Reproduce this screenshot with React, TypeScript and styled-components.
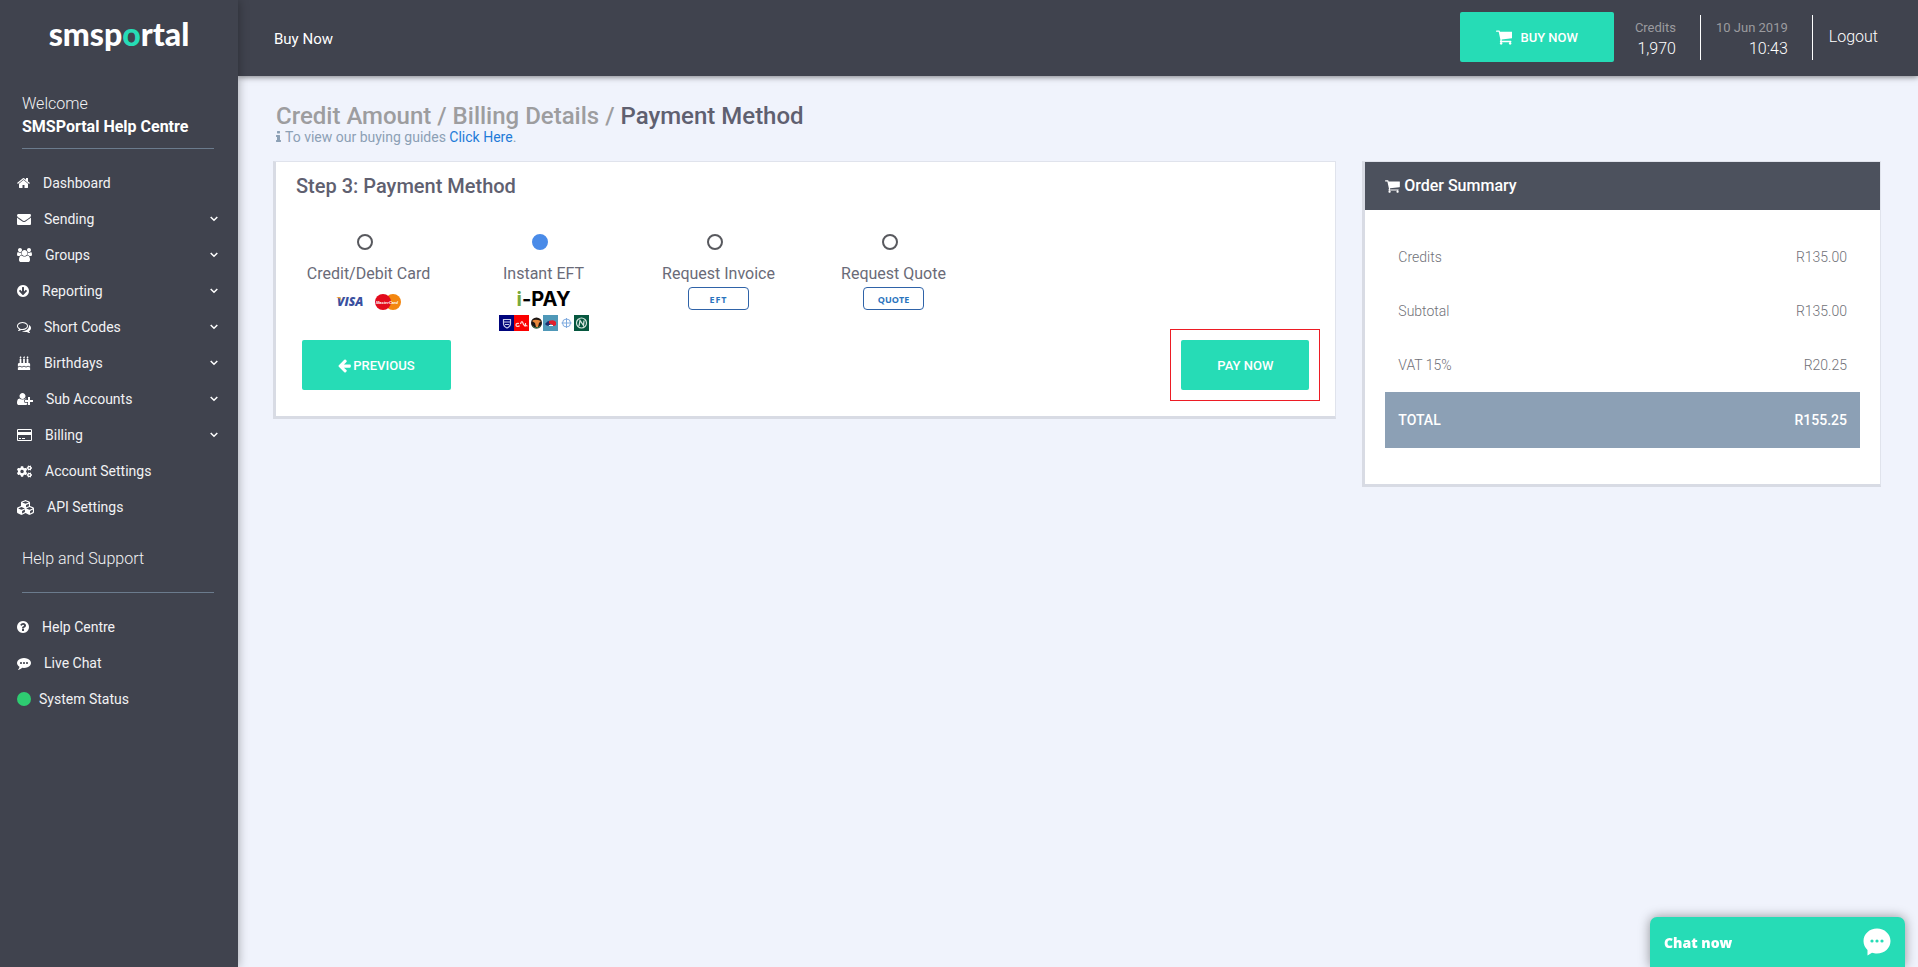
import React, { useState } from "react";
import styled, { createGlobalStyle } from "styled-components";
import { FaBirthdayCake, FaCogs, FaCubes } from "react-icons/fa";

const GlobalStyle = createGlobalStyle`
  *, *::before, *::after { box-sizing: border-box; }
  body {
    margin: 0;
    background: #f0f3fc;
    color: #5f6070;
    font-family: Roboto, "Liberation Sans", sans-serif;
    font-size: 14px;
    line-height: 20px;
  }
  h1, h2, p, ul { margin: 0; padding: 0; }
  ul { list-style: none; }
  a { text-decoration: none; color: inherit; }
  button { font-family: inherit; cursor: pointer; }
`;

const glyphs = {
  home: {
    box: "64 0 1664 1792",
    d: "M1472 992v480q0 26-19 45t-45 19h-384v-384h-256v384h-384q-26 0-45-19t-19-45v-480q0-1 .5-3t.5-3l575-474 575 474q1 2 1 6zm223-69l-62 74q-8 9-21 11h-3q-13 0-21-7l-692-577-692 577q-12 8-24 7-13-2-21-11l-62-74q-8-10-7-23.5t11-21.5l719-599q32-26 76-26t76 26l244 204v-195q0-14 9-23t23-9h192q14 0 23 9t9 23v408l219 182q10 8 11 21.5t-7 23.5z",
  },
  envelope: {
    box: "0 0 1792 1792",
    d: "M1792 710v794q0 66-47 113t-113 47h-1472q-66 0-113-47t-47-113v-794q44 49 101 87 362 246 497 345 57 42 92.5 65.5t94.5 48 110 24.5h2q51 0 110-24.5t94.5-48 92.5-65.5q170-123 498-345 57-39 100-87zm0-294q0 79-49 151t-122 123q-376 261-468 325-10 7-42.5 31t-54 38.5-52 32.5-57.5 27-50 9h-2q-23 0-50-9t-57.5-27-52-32.5-54-38.5-42.5-31q-91-64-262-182.5t-205-142.5q-62-42-117-115.5t-55-136.5q0-78 41.5-130t118.5-52h1472q65 0 112.5 47t47.5 113z",
  },
  users: {
    box: "0 0 1920 1792",
    d: "M593 896q-162 5-265 128h-134q-82 0-138-40.5t-56-118.5q0-353 124-353 6 0 43.5 21t97.5 42.5 119 21.5q67 0 133-23-5 37-5 66 0 139 81 256zm1071 637q0 120-73 189.5t-194 69.5h-874q-121 0-194-69.5t-73-189.5q0-53 3.5-103.5t14-109 26.5-108.5 43-97.5 62-81 85.5-53.5 111.5-20q10 0 43 21.5t73 48 107 48 135 21.5 135-21.5 107-48 73-48 43-21.5q61 0 111.5 20t85.5 53.5 62 81 43 97.5 26.5 108.5 14 109 3.5 103.5zm-1024-1277q0 106-75 181t-181 75-181-75-75-181 75-181 181-75 181 75 75 181zm704 384q0 159-112.5 271.5t-271.5 112.5-271.5-112.5-112.5-271.5 112.5-271.5 271.5-112.5 271.5 112.5 112.5 271.5zm576 225q0 78-56 118.5t-138 40.5h-134q-103-123-265-128 81-117 81-256 0-29-5-66 66 23 133 23 59 0 119-21.5t97.5-42.5 43.5-21q124 0 124 353zm-128-609q0 106-75 181t-181 75-181-75-75-181 75-181 181-75 181 75 75 181z",
  },
  arrowCircleDown: {
    box: "128 0 1536 1792",
    d: "M1412 897q0-27-18-45l-91-91q-18-18-45-18t-45 18l-189 189v-502q0-26-19-45t-45-19h-128q-26 0-45 19t-19 45v502l-189-189q-19-19-45-19t-45 19l-91 91q-18 18-18 45t18 45l362 362 91 91q18 18 45 18t45-18l91-91 362-362q18-18 18-45zm252-1q0 209-103 385.5t-279.5 279.5-385.5 103-385.5-103-279.5-279.5-103-385.5 103-385.5 279.5-279.5 385.5-103 385.5 103 279.5 279.5 103 385.5z",
  },
  comments: {
    box: "0 0 1792 1792",
    d: "M704 384q-153 0-286 52t-211.5 141-78.5 191q0 82 53 158t149 132l97 56-35 84q34-20 62-39l44-31 53 10q78 14 153 14 153 0 286-52t211.5-141 78.5-191-78.5-191-211.5-141-286-52zm0-128q191 0 353.5 68.5t256.5 186.5 94 257-94 257-256.5 186.5-353.5 68.5q-86 0-176-16-124 88-278 128-36 9-86 16h-3q-11 0-20.5-8t-11.5-21q-1-3-1-6.5t.5-6.5 2-6l2.5-5 3.5-5.5 4-5 4.5-5 4-4.5q5-6 23-25t26-29.5 22.5-29 25-38.5 20.5-44q-124-72-195-177t-71-224q0-139 94-257t256.5-186.5 353.5-68.5zm822 1169q10 24 20.5 44t25 38.5 22.5 29 26 29.5 23 25q1 1 4 4.5t4.5 5 4 5 3.5 5.5l2.5 5 2 6 .5 6.5-1 6.5q-3 14-13 22t-22 7q-50-7-86-16-154-40-278-128-90 16-176 16-271 0-472-132 58 4 88 4 161 0 309-45t264-129q125-92 192-212t67-254q0-77-23-152 129 71 204 178t75 230q0 120-71 224.5t-195 176.5z",
  },
  userPlus: {
    box: "0 0 2048 1792",
    d: "M704 896q-159 0-271.5-112.5t-112.5-271.5 112.5-271.5 271.5-112.5 271.5 112.5 112.5 271.5-112.5 271.5-271.5 112.5zm960 128h352q13 0 22.5 9.5t9.5 22.5v192q0 13-9.5 22.5t-22.5 9.5h-352v352q0 13-9.5 22.5t-22.5 9.5h-192q-13 0-22.5-9.5t-9.5-22.5v-352h-352q-13 0-22.5-9.5t-9.5-22.5v-192q0-13 9.5-22.5t22.5-9.5h352v-352q0-13 9.5-22.5t22.5-9.5h192q13 0 22.5 9.5t9.5 22.5v352zm-736 224q0 52 38 90t90 38h256v238q-68 50-171 50h-874q-121 0-194-69t-73-190q0-53 3.5-103.5t14-109 26.5-108.5 43-97.5 62-81 85.5-53.5 111.5-20q19 0 39 17 79 61 154.5 91.5t164.5 30.5 164.5-30.5 154.5-91.5q20-17 39-17 132 0 217 96h-223q-52 0-90 38t-38 90v192z",
  },
  creditCard: {
    box: "0 0 1920 1792",
    d: "M1760 128q66 0 113 47t47 113v1216q0 66-47 113t-113 47h-1600q-66 0-113-47t-47-113v-1216q0-66 47-113t113-47h1600zm-1600 128q-13 0-22.5 9.5t-9.5 22.5v224h1664v-224q0-13-9.5-22.5t-22.5-9.5h-1600zm1600 1280q13 0 22.5-9.5t9.5-22.5v-608h-1664v608q0 13 9.5 22.5t22.5 9.5h1600zm-1504-128v-128h256v128h-256zm384 0v-128h384v128h-384z",
  },
  question: {
    box: "128 0 1536 1792",
    d: "M1024 1376v-192q0-14-9-23t-23-9h-192q-14 0-23 9t-9 23v192q0 14 9 23t23 9h192q14 0 23-9t9-23zm256-672q0-88-55.5-163t-138.5-116-170-41q-243 0-371 213-15 24 8 42l132 100q7 6 19 6 16 0 25-12 53-68 86-92 34-24 86-24 48 0 85.5 26t37.5 59q0 38-20 61t-68 45q-63 28-115.5 86.5t-52.5 125.5v36q0 14 9 23t23 9h192q14 0 23-9t9-23q0-19 21.5-49.5t54.5-49.5q32-18 49-28.5t46-35 44.5-48 28-60.5 12.5-81zm384 192q0 209-103 385.5t-279.5 279.5-385.5 103-385.5-103-279.5-279.5-103-385.5 103-385.5 279.5-279.5 385.5-103 385.5 103 279.5 279.5 103 385.5z",
  },
  commenting: {
    box: "0 0 1792 1792",
    d: "M640 896q0-53-37.5-90.5t-90.5-37.5-90.5 37.5-37.5 90.5 37.5 90.5 90.5 37.5 90.5-37.5 37.5-90.5zm384 0q0-53-37.5-90.5t-90.5-37.5-90.5 37.5-37.5 90.5 37.5 90.5 90.5 37.5 90.5-37.5 37.5-90.5zm384 0q0-53-37.5-90.5t-90.5-37.5-90.5 37.5-37.5 90.5 37.5 90.5 90.5 37.5 90.5-37.5 37.5-90.5zm384 0q0 174-120 321.5t-326 233-450 85.5q-110 0-211-18-173 173-435 229-52 10-86 13-12 1-22-6t-13-18q-4-15 20-37 5-5 23.5-21.5t25.5-23.5 23.5-25.5 24-31.5 20.5-37 20-48 14.5-57.5 12.5-72.5q-146-90-229.5-216.5t-83.5-269.5q0-174 120-321.5t326-233 450-85.5 450 85.5 326 233 120 321.5z",
  },
  cart: {
    box: "64 0 1664 1792",
    d: "M704 1536q0 52-38 90t-90 38-90-38-38-90 38-90 90-38 90 38 38 90zm896 0q0 52-38 90t-90 38-90-38-38-90 38-90 90-38 90 38 38 90zm128-1088v512q0 24-16.5 42.5t-40.5 21.5l-1044 122q13 60 13 70 0 16-24 64h920q26 0 45 19t19 45-19 45-45 19h-1024q-26 0-45-19t-19-45q0-11 8-31.5t16-36 21.5-40 15.5-29.5l-177-823h-204q-26 0-45-19t-19-45 19-45 45-19h256q16 0 28.5 6.5t19.5 15.5 13 24.5 8 26 5.5 29.5 4.5 26h1201q26 0 45 19t19 45z",
  },
  arrowLeft: {
    box: "128 0 1536 1792",
    d: "M1664 896v128q0 53-32.5 90.5t-84.5 37.5h-704l293 294q38 36 38 90t-38 90l-75 76q-37 37-90 37-52 0-91-37l-651-652q-37-37-37-90 0-52 37-91l651-650q38-38 91-38 52 0 90 38l75 74q38 38 38 91t-38 91l-293 293h704q52 0 84.5 37.5t32.5 90.5z",
  },
  info: {
    box: "576 0 640 1792",
    d: "M1216 1344v128q0 26-19 45t-45 19h-512q-26 0-45-19t-19-45v-128q0-26 19-45t45-19h64v-384h-64q-26 0-45-19t-19-45v-128q0-26 19-45t45-19h384q26 0 45 19t19 45v576h64q26 0 45 19t19 45zm-128-1152v192q0 26-19 45t-45 19h-256q-26 0-45-19t-19-45v-192q0-26 19-45t45-19h256q26 0 45 19t19 45z",
  },
};

type GlyphName = keyof typeof glyphs;

const GlyphSvg = styled.svg<{ $size: number }>`
  height: ${(p) => p.$size}px;
  width: auto;
  flex: none;
  fill: currentColor;
`;

const Glyph = ({ name, size = 14 }: { name: GlyphName; size?: number }) => (
  <GlyphSvg $size={size} viewBox={glyphs[name].box} aria-hidden="true">
    <path d={glyphs[name].d} />
  </GlyphSvg>
);

/* ---------- frame ---------- */

const Page = styled.div`
  display: grid;
  grid-template-columns: 238px 1fr;
  min-height: 100vh;
`;

const Sidebar = styled.aside`
  background: #40434e;
  color: #f2f2f4;
  box-shadow: 0 0 10px rgba(0, 0, 0, 0.35);
  z-index: 2;
`;

const Logo = styled.a`
  display: flex;
  justify-content: center;
  padding: 16px 0 0 0;
  height: 92px;
  color: #fff;
  font-family: Lato, sans-serif;
  font-weight: 900;
  font-size: 32px;
  line-height: 36px;

  em {
    font-style: normal;
    color: #26dcb6;
  }
`;

const SideHeading = styled.div<{ $gap: number }>`
  margin: 0 24px 0 22px;
  padding-bottom: ${(p) => p.$gap}px;
  border-bottom: 1px solid #6b7b8d;
  font-size: 16px;
  font-weight: 300;
  line-height: 23px;

  strong {
    display: block;
    color: #fff;
    font-weight: 700;
  }
`;

const Menu = styled.ul<{ $bottom?: number }>`
  padding: 16px 20px ${(p) => p.$bottom ?? 0}px 17px;
`;

const MenuLink = styled.a<{ $gap?: number }>`
  display: flex;
  align-items: center;
  gap: ${(p) => p.$gap ?? 13}px;
  height: 36px;
  font-size: 14px;

  svg { color: #fff; }
`;

const ChevronSvg = styled.svg`
  width: 8px;
  height: 6px;
  margin-left: auto;
  fill: none;
  stroke: currentColor;
  stroke-width: 1.5;
`;

const StatusDot = styled.span`
  width: 14px;
  height: 14px;
  border-radius: 50%;
  background: #2ecc71;
`;

const Column = styled.div`
  min-width: 0;
`;

const TopBar = styled.header`
  display: flex;
  align-items: center;
  height: 76px;
  padding: 0 40px 2px 36px;
  background: #40434e;
  color: #fff;
  font-size: 16px;
  box-shadow: 0 1px 6px rgba(0, 0, 0, 0.5);
`;

const BarTitle = styled.div`
  flex: 1;
  padding-top: 4px;
  font-size: 15px;
`;

const Button = styled.button<{ $width: number }>`
  display: flex;
  align-items: center;
  justify-content: center;
  gap: 2px;
  width: ${(p) => p.$width}px;
  height: 50px;
  padding: 0;
  border: 0;
  border-radius: 2px;
  background: #26dcb6;
  color: #fff;
  font-size: 13px;
  font-weight: 500;
`;

const BuyButton = styled(Button)`
  gap: 8px;
  margin-right: 6px;
`;

const BarStat = styled.div`
  padding: 3px 24px 0 15px;
  border-right: 1px solid #fff;
  text-align: right;
  font-weight: 300;
  line-height: 22px;

  small {
    display: block;
    color: #9b9b9f;
    font-size: 13px;
    font-weight: 400;
    line-height: 20px;
  }
`;

const Logout = styled.a`
  padding-left: 16px;
  font-weight: 300;
`;

/* ---------- content ---------- */

const Main = styled.main`
  padding: 26px 24px 24px 22px;
`;

const PageHead = styled.div`
  padding: 0 13px 0 16px;
  margin-bottom: 17px;
`;

const Crumbs = styled.h1`
  color: #9d9d9f;
  font-size: 24px;
  line-height: 28px;
  font-weight: 500;

  span { color: #5f6070; }
`;

const Hint = styled.p`
  display: flex;
  align-items: center;
  gap: 4px;
  color: #8ca0b5;
  line-height: 12px;

  a { color: #1f7bd8; }
`;

const Cards = styled.div`
  display: grid;
  grid-template-columns: 2fr 1fr;
  align-items: start;
`;

const Card = styled.section`
  margin: 0 13px;
  border: 1px solid #e0e3ec;
  border-left: 3px solid #d8dbe4;
  border-bottom: 3px solid #d8dbe4;
  background: #fff;
`;

const StepTitle = styled.h2`
  padding: 12px 20px;
  font-size: 20px;
  line-height: 24px;
  font-weight: 500;
`;

const Options = styled.div`
  display: flex;
  padding: 22px 0 0 5px;
`;

const Option = styled.label`
  display: flex;
  flex-direction: column;
  align-items: center;
  width: 175px;
  height: 97px;
  font-size: 16px;
  color: #6a6b78;
  cursor: pointer;
`;

const Radio = styled.input`
  appearance: none;
  flex: none;
  width: 16px;
  height: 16px;
  margin: 2px 7px 14px 0;
  border: 2px solid #58595e;
  border-radius: 50%;
  background: #fff;

  &:checked {
    border-color: #4a8be8;
    background: #4a8be8;
  }
`;

const CardLogos = styled.span`
  display: flex;
  align-items: center;
  gap: 8px;
  padding-top: 10px;

  svg { overflow: visible; }
`;

const Badge = styled.span`
  width: 61px;
  height: 23px;
  margin-top: 3px;
  border: 1px solid #2f63a8;
  border-radius: 4px;
  color: #2a74bd;
  font-family: "Open Sans", sans-serif;
  font-size: 9px;
  font-weight: 700;
  line-height: 23px;
  letter-spacing: 1px;
  text-align: center;
`;

const QuoteBadge = styled(Badge)`
  letter-spacing: normal;
`;

const IPay = styled.span`
  color: #000;
  font-family: Inter, "Liberation Sans", sans-serif;
  font-size: 20px;
  line-height: 30px;
  font-weight: 700;

  i { font-style: normal; color: #77a93c; }
`;

const Banks = styled.svg`
  flex: none;
  width: 90px;
  height: 16px;
  margin-top: 1px;
`;

const Actions = styled.div`
  display: flex;
  align-items: center;
  justify-content: space-between;
  padding: 0 15px 15px 26px;
`;

const Highlight = styled.div`
  padding: 10px;
  border: 1px solid #ed1c24;
`;

const OrderCard = styled(Card)`
  padding-bottom: 36px;
`;

const OrderTitle = styled.h2`
  display: flex;
  align-items: center;
  gap: 4px;
  height: 48px;
  padding: 0 20px;
  background: #4c515d;
  color: #fff;
  font-size: 16px;
  font-weight: 500;
`;

const OrderBody = styled.div`
  padding: 20px 20px 0;
`;

const OrderTable = styled.table`
  width: 100%;
  border-collapse: collapse;
  color: #707178;

  th, td {
    height: 54px;
    padding: 0 13px;
    font-weight: 300;
    text-align: left;
  }
  td { text-align: right; }
`;

const TotalRow = styled.tr`
  background: #8ca0b5;
  color: #fff;

  && th, && td {
    height: 56px;
    font-weight: 500;
  }
`;

const ChatButton = styled.button`
  position: fixed;
  right: 13px;
  bottom: 0;
  z-index: 5;
  display: flex;
  align-items: center;
  justify-content: space-between;
  width: 255px;
  height: 50px;
  padding: 0 14px;
  border: 0;
  border-radius: 7px 7px 0 0;
  background: #26dcb6;
  color: #fff;
  font-size: 14px;
  font-weight: 800;
  box-shadow: 0 0 12px rgba(0, 0, 0, 0.4);

  && { font-family: "Open Sans", sans-serif; }
`;

const Chevron = () => (
  <ChevronSvg viewBox="0 0 8 6" aria-hidden="true">
    <path d="M0.7 1l3.3 3.3L7.3 1" />
  </ChevronSvg>
);

const accountMenu: { label: string; icon: React.ReactNode; open?: boolean }[] = [
  { label: "Dashboard", icon: <Glyph name="home" /> },
  { label: "Sending", icon: <Glyph name="envelope" />, open: true },
  { label: "Groups", icon: <Glyph name="users" />, open: true },
  { label: "Reporting", icon: <Glyph name="arrowCircleDown" />, open: true },
  { label: "Short Codes", icon: <Glyph name="comments" />, open: true },
  { label: "Birthdays", icon: <FaBirthdayCake size={14} />, open: true },
  { label: "Sub Accounts", icon: <Glyph name="userPlus" />, open: true },
  { label: "Billing", icon: <Glyph name="creditCard" />, open: true },
  { label: "Account Settings", icon: <FaCogs size={15} /> },
  { label: "API Settings", icon: <FaCubes size={17} /> },
];

const VisaMaster = () => (
  <CardLogos>
    <svg width="30" height="12" viewBox="0 0 30 12" role="img" aria-label="Visa">
      <text x="0" y="10" fontFamily="Open Sans, sans-serif" fontSize="12" fontWeight="800" fontStyle="italic" fill="#3a50a0">VISA</text>
      <path d="M-1 1h4l2 4Q3 2 -1 1z" fill="#f0a030" />
    </svg>
    <svg width="26" height="16" viewBox="0 0 26 16" role="img" aria-label="MasterCard">
      <circle cx="18" cy="8" r="8" fill="#f3860f" />
      <circle cx="8" cy="8" r="8" fill="#e30b1c" />
      <text x="1" y="10" fontFamily="Liberation Sans, sans-serif" fontSize="4" fontWeight="700" fontStyle="italic" fill="#fff">MasterCard</text>
    </svg>
  </CardLogos>
);

const BankStrip = () => (
  <Banks viewBox="0 0 90 16" aria-hidden="true">
    <rect width="15" height="16" fill="#00047c" />
    <path d="M4.500 4.500h7v4q0 3-3.500 4.500-3.500-1.500-3.500-4.500z" fill="none" stroke="#c8cce8" strokeWidth="1.200" />
    <path d="M5 7h6M6 9.500h4" stroke="#c8cce8" />
    <rect x="15" width="15" height="16" fill="#fb0000" />
    <path d="M20 8.500q-3-.5-3 1.500t3 1.200v-1M21.500 9q1.500-5 3 .5l2 2M26.500 8q-.5 3 2 3" fill="none" stroke="#ffd9d9" strokeWidth="1.200" />
    <circle cx="37.500" cy="8" r="5.500" fill="#1d1512" />
    <path d="M33 6q3-2.500 9 0l-2 2-1 4h-2l-1-4z" fill="#e8883a" />
    <path d="M33.500 11q3.500 4 8 0" fill="none" stroke="#4b8d56" />
    <rect x="44" width="15" height="16" fill="#4f98b8" />
    <path d="M46 9q3-4 6-3l-1 4q-3 2-5-1z" fill="#1d2c6b" />
    <path d="M50 6q5-2 7 1v3q-3 2-4-.5l-3-1z" fill="#e01f2d" />
    <path d="M50 10.500h4" stroke="#fff" />
    <circle cx="67.500" cy="8" r="4" fill="none" stroke="#7fabdf" />
    <path d="M62.500 8h10M67.500 3v10" stroke="#7fabdf" />
    <rect x="75" width="15" height="16" fill="#06573f" />
    <circle cx="82.500" cy="8" r="5" fill="none" stroke="#d5e4dd" strokeWidth="1.200" />
    <path d="M80 11l1-5.500 3.500 5 .5-5" fill="none" stroke="#d5e4dd" strokeWidth="1.300" />
  </Banks>
);

const methods = [
  { id: "card", label: "Credit/Debit Card", extra: <VisaMaster /> },
  {
    id: "ipay",
    label: "Instant EFT",
    extra: (
      <>
        <IPay><i>i</i>-PAY</IPay>
        <BankStrip />
      </>
    ),
  },
  { id: "invoice", label: "Request Invoice", extra: <Badge>EFT</Badge> },
  { id: "quote", label: "Request Quote", extra: <QuoteBadge>QUOTE</QuoteBadge> },
];

const lines = [
  ["Credits", "R135.00"],
  ["Subtotal", "R135.00"],
  ["VAT 15%", "R20.25"],
];

export default function App() {
  const [method, setMethod] = useState("ipay");

  return (
    <>
      <GlobalStyle />
      <Page>
        <Sidebar>
          <Logo href="#"><span>smsp<em>o</em>rtal</span></Logo>
          <SideHeading $gap={10}>
            Welcome
            <strong>SMSPortal Help Centre</strong>
          </SideHeading>
          <nav>
            <Menu $bottom={22}>
              {accountMenu.map((item) => (
                <li key={item.label}>
                  <MenuLink href="#">
                    {item.icon}
                    {item.label}
                    {item.open && <Chevron />}
                  </MenuLink>
                </li>
              ))}
            </Menu>
          </nav>
          <SideHeading $gap={22}>Help and Support</SideHeading>
          <nav>
            <Menu>
              <li><MenuLink href="#"><Glyph name="question" />Help Centre</MenuLink></li>
              <li><MenuLink href="#"><Glyph name="commenting" />Live Chat</MenuLink></li>
              <li><MenuLink href="#" $gap={8}><StatusDot />System Status</MenuLink></li>
            </Menu>
          </nav>
        </Sidebar>

        <Column>
          <TopBar>
            <BarTitle>Buy Now</BarTitle>
            <BuyButton type="button" $width={154}><Glyph name="cart" size={18} />BUY NOW</BuyButton>
            <BarStat><small>Credits</small>1,970</BarStat>
            <BarStat><small>10 Jun 2019</small>10:43</BarStat>
            <Logout href="#">Logout</Logout>
          </TopBar>

          <Main>
            <PageHead>
              <Crumbs>Credit Amount / Billing Details / <span>Payment Method</span></Crumbs>
              <Hint>
                <Glyph name="info" />
                <span>To view our buying guides <a href="#">Click Here</a>.</span>
              </Hint>
            </PageHead>

            <Cards>
              <Card>
                <StepTitle>Step 3: Payment Method</StepTitle>
                <Options role="radiogroup" aria-label="Payment Method">
                  {methods.map((m) => (
                    <Option key={m.id}>
                      <Radio type="radio" name="method" checked={method === m.id} onChange={() => setMethod(m.id)} />
                      {m.label}
                      {m.extra}
                    </Option>
                  ))}
                </Options>
                <Actions>
                  <Button type="button" $width={149}><Glyph name="arrowLeft" size={15} />PREVIOUS</Button>
                  <Highlight>
                    <Button type="button" $width={128}>PAY NOW</Button>
                  </Highlight>
                </Actions>
              </Card>

              <OrderCard>
                <OrderTitle><Glyph name="cart" size={16} />Order Summary</OrderTitle>
                <OrderBody>
                  <OrderTable>
                    <tbody>
                      {lines.map(([label, amount]) => (
                        <tr key={label}>
                          <th scope="row">{label}</th>
                          <td>{amount}</td>
                        </tr>
                      ))}
                      <TotalRow>
                        <th scope="row">TOTAL</th>
                        <td>R155.25</td>
                      </TotalRow>
                    </tbody>
                  </OrderTable>
                </OrderBody>
              </OrderCard>
            </Cards>
          </Main>
        </Column>
      </Page>

      <ChatButton type="button">
        Chat now
        <svg width="28" height="28" viewBox="0 0 28 28" aria-hidden="true">
          <path d="M14 0.500c7.500 0 13.500 5.500 13.500 12.500S21.500 25.500 14 25.500c-2 0-3.500-.3-5-.8L4.500 27.500v-5.500C2 19.500.5 16.500.5 13 .5 6 6.500.5 14 .5z" fill="#fff" />
          <circle cx="9" cy="13" r="1.600" fill="#26dcb6" />
          <circle cx="14" cy="13" r="1.600" fill="#26dcb6" />
          <circle cx="19" cy="13" r="1.600" fill="#26dcb6" />
        </svg>
      </ChatButton>
    </>
  );
}
